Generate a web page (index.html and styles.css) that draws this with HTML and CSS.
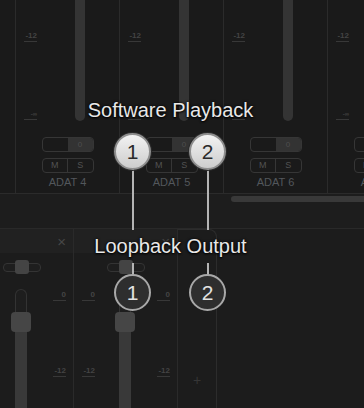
FILE: index.html
```html
<!DOCTYPE html>
<html lang="en">
<head>
    <meta charset="UTF-8">
    <meta name="viewport" content="width=device-width, initial-scale=1.0">
    <title>Loopback</title>
    <link rel="stylesheet" href="styles.css">
</head>
<body>

    <div class="mixer">
        <div class="strip stub"></div>
        <div class="strip">
            <div class="meter">
                <div class="scale">
                    <span class="tick">-12</span>
                    <span class="tick low">-∞</span>
                </div>
                <div class="bar"></div>
            </div>
            <div class="pan"><span></span><span class="val">0</span></div>
            <div class="ms"><span>M</span><span>S</span></div>
            <div class="name">ADAT 4</div>
        </div>
        <div class="strip">
            <div class="meter">
                <div class="scale">
                    <span class="tick">-12</span>
                    <span class="tick low">-∞</span>
                </div>
                <div class="bar"></div>
            </div>
            <div class="pan"><span></span><span class="val">0</span></div>
            <div class="ms"><span>M</span><span>S</span></div>
            <div class="name">ADAT 5</div>
        </div>
        <div class="strip">
            <div class="meter">
                <div class="scale">
                    <span class="tick">-12</span>
                    <span class="tick low">-∞</span>
                </div>
                <div class="bar"></div>
            </div>
            <div class="pan"><span></span><span class="val">0</span></div>
            <div class="ms"><span>M</span><span>S</span></div>
            <div class="name">ADAT 6</div>
        </div>
        <div class="strip">
            <div class="meter">
                <div class="scale">
                    <span class="tick">-12</span>
                    <span class="tick low">-∞</span>
                </div>
                <div class="bar"></div>
            </div>
            <div class="pan"><span></span><span class="val">0</span></div>
            <div class="ms"><span>M</span><span>S</span></div>
            <div class="name">ADAT 7</div>
        </div>
    </div>

    <div class="scroller"><div class="thumb"></div></div>

    <div class="outputs">
        <div class="col first">
            <div class="head"><span class="close">×</span></div>
            <div class="balance"><div class="knob"></div></div>
            <div class="body">
                <div class="scale"><span class="tick">0</span><span class="tick">-12</span></div>
                <div class="fader"><div class="rail"></div><div class="cap"></div><div class="fill"></div></div>
                <div class="scale"><span class="tick">0</span><span class="tick">-12</span></div>
            </div>
        </div>
        <div class="col">
            <div class="head"><span class="close">×</span></div>
            <div class="balance"><div class="knob"></div></div>
            <div class="body">
                <div class="scale"><span class="tick">0</span><span class="tick">-12</span></div>
                <div class="fader"><div class="rail"></div><div class="cap"></div><div class="fill"></div></div>
                <div class="scale"><span class="tick">0</span><span class="tick">-12</span></div>
            </div>
        </div>
        <div class="add"><span>+</span></div>
    </div>

    <!-- annotation callouts drawn over the mixer -->
    <div class="label top-label">Software Playback</div>
    <div class="label bottom-label">Loopback Output</div>

    <div class="wire w1 upper"></div>
    <div class="wire w2 upper"></div>
    <div class="wire w1 lower"></div>
    <div class="wire w2 lower"></div>

    <div class="badge light b1">1</div>
    <div class="badge light b2">2</div>
    <div class="badge dark b1 down">1</div>
    <div class="badge dark b2 down">2</div>

</body>
</html>
```

FILE: styles.css
```css
* {
    box-sizing: border-box;
}

body, html {
    margin: 0;
    padding: 0;
    height: 100%;
    overflow: hidden;
    background-color: #1c1c1c;
    font-family: "Liberation Sans", Arial, sans-serif;
}

body {
    position: relative;
}

/* top mixer */
.mixer {
    display: flex;
    height: 194px;
    background: #1a1a1a;
    border-bottom: 1px solid #2b2b2b;
    overflow: hidden;
}

.strip {
    flex: 0 0 104px;
    border-right: 1px solid #2b2b2b;
    display: flex;
    flex-direction: column;
    align-items: center;
}

.stub {
    flex-basis: 16px;
}

.meter {
    align-self: stretch;
    height: 122px;
    flex-shrink: 0;
    display: flex;
}

.scale {
    display: flex;
    flex-direction: column;
    align-items: flex-end;
}

.mixer .scale {
    width: 13px;
    margin-left: 8px;
    padding-top: 31px;
}

.tick {
    display: block;
    flex-shrink: 0;
    width: 13px;
    height: 11px;
    line-height: 10px;
    font-size: 8px;
    font-weight: bold;
    text-align: right;
    color: #444;
    border-bottom: 1px solid #383838;
}

.tick.low {
    margin-top: 67px;
    font-size: 6px;
}

.bar {
    width: 10px;
    margin-left: 38px;
    height: 121px;
    background: #343434;
    border-radius: 0 0 5px 5px;
}

.pan {
    margin-top: 15px;
    width: 52px;
    height: 15px;
    flex-shrink: 0;
    display: flex;
    border: 1px solid #363636;
    border-radius: 4px;
    overflow: hidden;
}

.pan span {
    flex: 1;
}

.pan .val {
    background: #333;
    color: #4e4e4e;
    font-size: 8px;
    text-align: center;
    line-height: 13px;
}

.ms {
    margin-top: 6px;
    width: 52px;
    height: 15px;
    flex-shrink: 0;
    display: flex;
    border: 1px solid #363636;
    border-radius: 4px;
}

.ms span {
    flex: 1;
    font-size: 9px;
    line-height: 13px;
    text-align: center;
    color: #525252;
}

.ms span + span {
    border-left: 1px solid #363636;
}

.name {
    margin-top: 3px;
    font-size: 11px;
    line-height: 12px;
    color: #53575c;
    white-space: nowrap;
}

/* horizontal scrollbar */
.scroller {
    height: 34px;
    background: #1d1d1d;
    padding: 2px 0 0 231px;
}

.thumb {
    height: 6px;
    background: #393939;
    border-radius: 3px 0 0 3px;
}

/* output channels */
.outputs {
    display: flex;
    height: 180px;
    border-top: 1px solid #292929;
    overflow: hidden;
}

.col {
    flex: 0 0 104px;
    display: flex;
    flex-direction: column;
    border-right: 1px solid #2a2a2a;
}

.col.first {
    margin-left: -30px;
}

.head {
    flex-shrink: 0;
    height: 24px;
    background: #212121;
    display: flex;
    justify-content: flex-end;
    align-items: center;
    padding-right: 7px;
}

.close {
    font-size: 15px;
    line-height: 15px;
    color: #474747;
}

.balance {
    flex-shrink: 0;
    margin: 7px 0 0 33px;
    width: 38px;
    height: 14px;
    display: flex;
    align-items: center;
    position: relative;
}

.balance::before {
    content: "";
    flex: 1;
    height: 7px;
    border: 1px solid #343434;
    border-radius: 4px;
    background: #1e1e1e;
}

.knob {
    position: absolute;
    left: 12px;
    top: 0;
    width: 14px;
    height: 14px;
    border-radius: 3px;
    background: #444;
}

.body {
    flex: 1;
    min-height: 0;
    display: flex;
    padding-left: 8px;
}

.body .scale {
    padding-top: 16px;
}

.body .tick {
    margin-bottom: 65px;
}

.fader {
    margin: 15px 0 0 20px;
    width: 20px;
    display: flex;
    flex-direction: column;
    align-items: center;
}

.rail {
    flex-shrink: 0;
    width: 12px;
    height: 25px;
    border: 1px solid #333;
    border-bottom: none;
    border-radius: 6px 6px 0 0;
    background: #1e1e1e;
}

.cap {
    flex-shrink: 0;
    width: 20px;
    height: 20px;
    margin-top: -2px;
    border-radius: 4px;
    background: #464646;
}

.fill {
    flex: 1;
    width: 12px;
    background: #393939;
}

.fader + .scale {
    margin-left: 22px;
}

.add {
    flex: 0 0 39px;
    border-right: 1px solid #2c2c2c;
    border-top: 1px solid #2c2c2c;
    border-top-right-radius: 8px;
    display: flex;
    justify-content: center;
    align-items: flex-end;
    padding-bottom: 20px;
}

.add span {
    font-size: 14px;
    color: #363636;
}

/* callouts */
.label {
    position: absolute;
    left: 0;
    width: 341px;
    text-align: center;
    font-size: 20px;
    line-height: 20px;
    color: #e8e8e8;
    text-shadow: 0 0 3px #000, 0 1px 2px #000;
}

.top-label {
    top: 100px;
}

.bottom-label {
    top: 236px;
}

.wire {
    position: absolute;
    width: 2px;
    background: #b4b4b4;
}

.w1 { left: 132px; }
.w2 { left: 207px; }

.upper {
    top: 168px;
    height: 62px;
}

.lower {
    top: 263px;
    height: 13px;
}

.badge {
    position: absolute;
    top: 133px;
    width: 37px;
    height: 37px;
    border-radius: 50%;
    text-align: center;
    font-size: 21px;
    line-height: 33px;
}

.b1 { left: 114px; }
.b2 { left: 189px; }

.badge.light {
    border: 2px solid #8e8e8e;
    background: linear-gradient(#f2f2f2, #cdcdcd);
    color: #2a2a2a;
    box-shadow: 0 0 0 1px #2a2a2a;
}

.badge.dark {
    top: 274px;
    border: 2px solid #a8a8a8;
    background: #2e2e2e;
    color: #e2e2e2;
}
```
